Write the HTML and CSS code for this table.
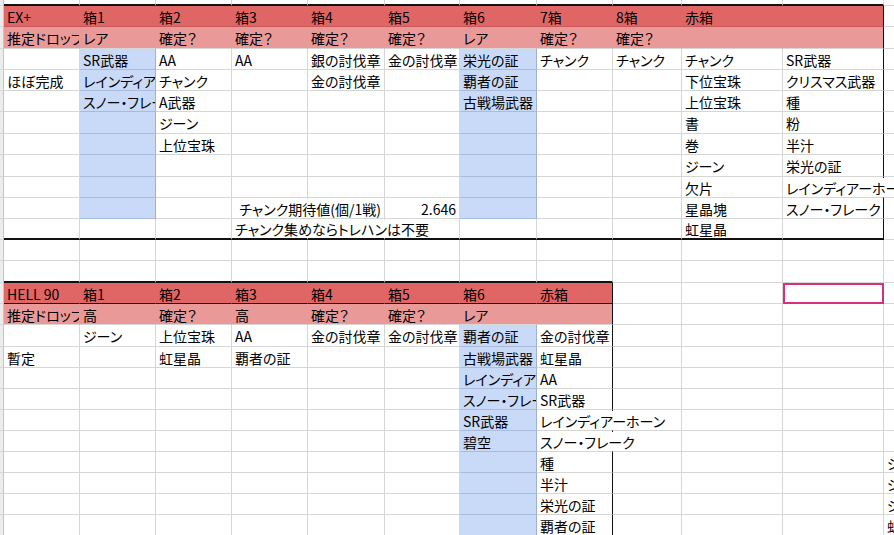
FILE: index.html
```html
<!DOCTYPE html>
<html lang="ja">
<head>
<meta charset="utf-8">
<title>Sheet</title>
<link rel="stylesheet" href="styles.css">
</head>
<body>
<div class="sheet">
  <div class="row r6">
    <div class="c g"></div><div class="c tb"></div><div class="c tb"></div><div class="c tb"></div><div class="c tb"></div><div class="c tb"></div><div class="c tb"></div><div class="c tb"></div><div class="c tb"></div><div class="c tb"></div><div class="c tb"></div><div class="c tb"></div><div class="c"></div>
  </div>
  <div class="row r21">
    <div class="c g"></div><div class="c hd">EX+</div><div class="c hd">箱1</div><div class="c hd">箱2</div><div class="c hd">箱3</div><div class="c hd">箱4</div><div class="c hd">箱5</div><div class="c hd">箱6</div><div class="c hd">7箱</div><div class="c hd">8箱</div><div class="c hd">赤箱</div><div class="c hd rb"></div><div class="c"></div>
  </div>
  <div class="row r22">
    <div class="c g"></div><div class="c sub">推定ドロップ率</div><div class="c sub">レア</div><div class="c sub">確定？</div><div class="c sub">確定？</div><div class="c sub">確定？</div><div class="c sub">確定？</div><div class="c sub">レア</div><div class="c sub">確定？</div><div class="c sub">確定？</div><div class="c sub"></div><div class="c sub rb"></div><div class="c"></div>
  </div>
  <div class="row r21">
    <div class="c g"></div><div class="c"></div><div class="c bl">SR武器</div><div class="c">AA</div><div class="c">AA</div><div class="c">銀の討伐章</div><div class="c">金の討伐章</div><div class="c bl">栄光の証</div><div class="c">チャンク</div><div class="c">チャンク</div><div class="c">チャンク</div><div class="c rb">SR武器</div><div class="c"></div>
  </div>
  <div class="row r21">
    <div class="c g"></div><div class="c">ほぼ完成</div><div class="c bl">レインディアーホーン</div><div class="c">チャンク</div><div class="c"></div><div class="c">金の討伐章</div><div class="c"></div><div class="c bl">覇者の証</div><div class="c"></div><div class="c"></div><div class="c">下位宝珠</div><div class="c rb">クリスマス武器</div><div class="c"></div>
  </div>
  <div class="row r21">
    <div class="c g"></div><div class="c"></div><div class="c bl">スノー・フレーク</div><div class="c">A武器</div><div class="c"></div><div class="c"></div><div class="c"></div><div class="c bl">古戦場武器</div><div class="c"></div><div class="c"></div><div class="c">上位宝珠</div><div class="c rb">種</div><div class="c"></div>
  </div>
  <div class="row r22">
    <div class="c g"></div><div class="c"></div><div class="c bl"></div><div class="c">ジーン</div><div class="c"></div><div class="c"></div><div class="c"></div><div class="c bl"></div><div class="c"></div><div class="c"></div><div class="c">書</div><div class="c rb">粉</div><div class="c"></div>
  </div>
  <div class="row r21">
    <div class="c g"></div><div class="c"></div><div class="c bl"></div><div class="c">上位宝珠</div><div class="c"></div><div class="c"></div><div class="c"></div><div class="c bl"></div><div class="c"></div><div class="c"></div><div class="c">巻</div><div class="c rb">半汁</div><div class="c"></div>
  </div>
  <div class="row r22">
    <div class="c g"></div><div class="c"></div><div class="c bl"></div><div class="c"></div><div class="c"></div><div class="c"></div><div class="c"></div><div class="c bl"></div><div class="c"></div><div class="c"></div><div class="c">ジーン</div><div class="c rb">栄光の証</div><div class="c"></div>
  </div>
  <div class="row r21">
    <div class="c g"></div><div class="c"></div><div class="c bl"></div><div class="c"></div><div class="c"></div><div class="c"></div><div class="c"></div><div class="c bl"></div><div class="c"></div><div class="c"></div><div class="c">欠片</div><div class="c rb ov"><span class="spill">レインディアーホーン</span></div><div class="c"></div>
  </div>
  <div class="row r21">
    <div class="c g"></div><div class="c"></div><div class="c bl"></div><div class="c"></div><div class="c"></div><div class="c ov num"><span class="spill">チャンク期待値(個/1戦)</span></div><div class="c num">2.646</div><div class="c bl"></div><div class="c"></div><div class="c"></div><div class="c">星晶塊</div><div class="c rb">スノー・フレーク</div><div class="c"></div>
  </div>
  <div class="row r21">
    <div class="c g"></div><div class="c tb"></div><div class="c tb"></div><div class="c tb"></div><div class="c tb ov"><span class="spill">チャンク集めならトレハンは不要</span></div><div class="c tb"></div><div class="c tb"></div><div class="c tb"></div><div class="c tb"></div><div class="c tb"></div><div class="c tb">虹星晶</div><div class="c tb rb"></div><div class="c"></div>
  </div>
  <div class="row r21">
    <div class="c g"></div><div class="c"></div><div class="c"></div><div class="c"></div><div class="c"></div><div class="c"></div><div class="c"></div><div class="c"></div><div class="c"></div><div class="c"></div><div class="c"></div><div class="c"></div><div class="c"></div>
  </div>
  <div class="row r22">
    <div class="c g"></div><div class="c tb"></div><div class="c tb"></div><div class="c tb"></div><div class="c tb"></div><div class="c tb"></div><div class="c tb"></div><div class="c tb"></div><div class="c tb"></div><div class="c"></div><div class="c"></div><div class="c"></div><div class="c"></div>
  </div>
  <div class="row r21">
    <div class="c g"></div><div class="c hd hb">HELL 90</div><div class="c hd hb">箱1</div><div class="c hd hb">箱2</div><div class="c hd hb">箱3</div><div class="c hd hb">箱4</div><div class="c hd hb">箱5</div><div class="c hd hb">箱6</div><div class="c hd hb rb">赤箱</div><div class="c"></div><div class="c"></div><div class="c sel"></div><div class="c"></div>
  </div>
  <div class="row r21">
    <div class="c g"></div><div class="c sub">推定ドロップ率</div><div class="c sub">高</div><div class="c sub">確定？</div><div class="c sub">高</div><div class="c sub">確定？</div><div class="c sub">確定？</div><div class="c sub">レア</div><div class="c sub rb"></div><div class="c"></div><div class="c"></div><div class="c"></div><div class="c"></div>
  </div>
  <div class="row r22">
    <div class="c g"></div><div class="c"></div><div class="c">ジーン</div><div class="c">上位宝珠</div><div class="c">AA</div><div class="c">金の討伐章</div><div class="c">金の討伐章</div><div class="c bl">覇者の証</div><div class="c rb">金の討伐章</div><div class="c"></div><div class="c"></div><div class="c"></div><div class="c"></div>
  </div>
  <div class="row r21">
    <div class="c g"></div><div class="c">暫定</div><div class="c"></div><div class="c">虹星晶</div><div class="c">覇者の証</div><div class="c"></div><div class="c"></div><div class="c bl">古戦場武器</div><div class="c rb">虹星晶</div><div class="c"></div><div class="c"></div><div class="c"></div><div class="c"></div>
  </div>
  <div class="row r21">
    <div class="c g"></div><div class="c"></div><div class="c"></div><div class="c"></div><div class="c"></div><div class="c"></div><div class="c"></div><div class="c bl">レインディアーホーン</div><div class="c rb">AA</div><div class="c"></div><div class="c"></div><div class="c"></div><div class="c"></div>
  </div>
  <div class="row r21">
    <div class="c g"></div><div class="c"></div><div class="c"></div><div class="c"></div><div class="c"></div><div class="c"></div><div class="c"></div><div class="c bl">スノー・フレーク</div><div class="c rb">SR武器</div><div class="c"></div><div class="c"></div><div class="c"></div><div class="c"></div>
  </div>
  <div class="row r21">
    <div class="c g"></div><div class="c"></div><div class="c"></div><div class="c"></div><div class="c"></div><div class="c"></div><div class="c"></div><div class="c bl">SR武器</div><div class="c rb ov"><span class="spill">レインディアーホーン</span></div><div class="c"></div><div class="c"></div><div class="c"></div><div class="c"></div>
  </div>
  <div class="row r21">
    <div class="c g"></div><div class="c"></div><div class="c"></div><div class="c"></div><div class="c"></div><div class="c"></div><div class="c"></div><div class="c bl">碧空</div><div class="c rb ov"><span class="spill">スノー・フレーク</span></div><div class="c"></div><div class="c"></div><div class="c"></div><div class="c"></div>
  </div>
  <div class="row r21">
    <div class="c g"></div><div class="c"></div><div class="c"></div><div class="c"></div><div class="c"></div><div class="c"></div><div class="c"></div><div class="c bl"></div><div class="c rb">種</div><div class="c"></div><div class="c"></div><div class="c"></div><div class="c">シーン</div>
  </div>
  <div class="row r21">
    <div class="c g"></div><div class="c"></div><div class="c"></div><div class="c"></div><div class="c"></div><div class="c"></div><div class="c"></div><div class="c bl"></div><div class="c rb">半汁</div><div class="c"></div><div class="c"></div><div class="c"></div><div class="c">シーン</div>
  </div>
  <div class="row r21">
    <div class="c g"></div><div class="c"></div><div class="c"></div><div class="c"></div><div class="c"></div><div class="c"></div><div class="c"></div><div class="c bl"></div><div class="c rb">栄光の証</div><div class="c"></div><div class="c"></div><div class="c"></div><div class="c">シーン</div>
  </div>
  <div class="row r21">
    <div class="c g"></div><div class="c"></div><div class="c"></div><div class="c"></div><div class="c"></div><div class="c"></div><div class="c"></div><div class="c bl"></div><div class="c rb">覇者の証</div><div class="c"></div><div class="c"></div><div class="c"></div><div class="c">虹星晶</div>
  </div>
</div>
</body>
</html>
```

FILE: styles.css
```css
html, body {
  margin: 0;
  padding: 0;
  background: #fff;
  overflow: hidden;
}

.sheet {
  width: 984px;
  font-family: "Noto Sans CJK JP", "Noto Sans", sans-serif;
  font-size: 14px;
  font-feature-settings: "palt";
  color: #000;
}

.row {
  display: grid;
  grid-template-columns: 4px 76px 76px 76px 76px 77px 75px 77px 76px 69px 101px 101px 100px;
}

.r6 { height: 6px; }
.r21 { height: 21px; }
.r22 { height: 22px; }

.c {
  box-sizing: border-box;
  border-right: 1px solid #d6d6d6;
  border-bottom: 1px solid #d6d6d6;
  padding: 1px 3px 0 3px;
  display: flex;
  align-items: center;
  white-space: nowrap;
  overflow: hidden;
  line-height: 1;
}

.g {
  background: #ececec;
  border-right-color: #c4c4c4;
  padding: 0;
}

.hd {
  background: #e06666;
  border-right-color: #e06666;
  border-bottom-color: #c85858;
}

.sub {
  background: #ea9999;
  border-right-color: #ea9999;
}

.bl {
  background: #c9daf8;
  border-right-color: #9fb1d3;
  border-bottom-color: #a9bbda;
}

.tb { border-bottom: 2px solid #111; }
.hb { border-bottom-color: #111; }
.rb { border-right-color: #111; }

.num { justify-content: flex-end; }

.ov { overflow: visible; }

.spill {
  position: relative;
  z-index: 1;
  flex-shrink: 0;
  align-self: stretch;
  display: flex;
  align-items: center;
  background: #fff;
}

.sel {
  outline: 2px solid #d62f7b;
  outline-offset: -2px;
}
```
